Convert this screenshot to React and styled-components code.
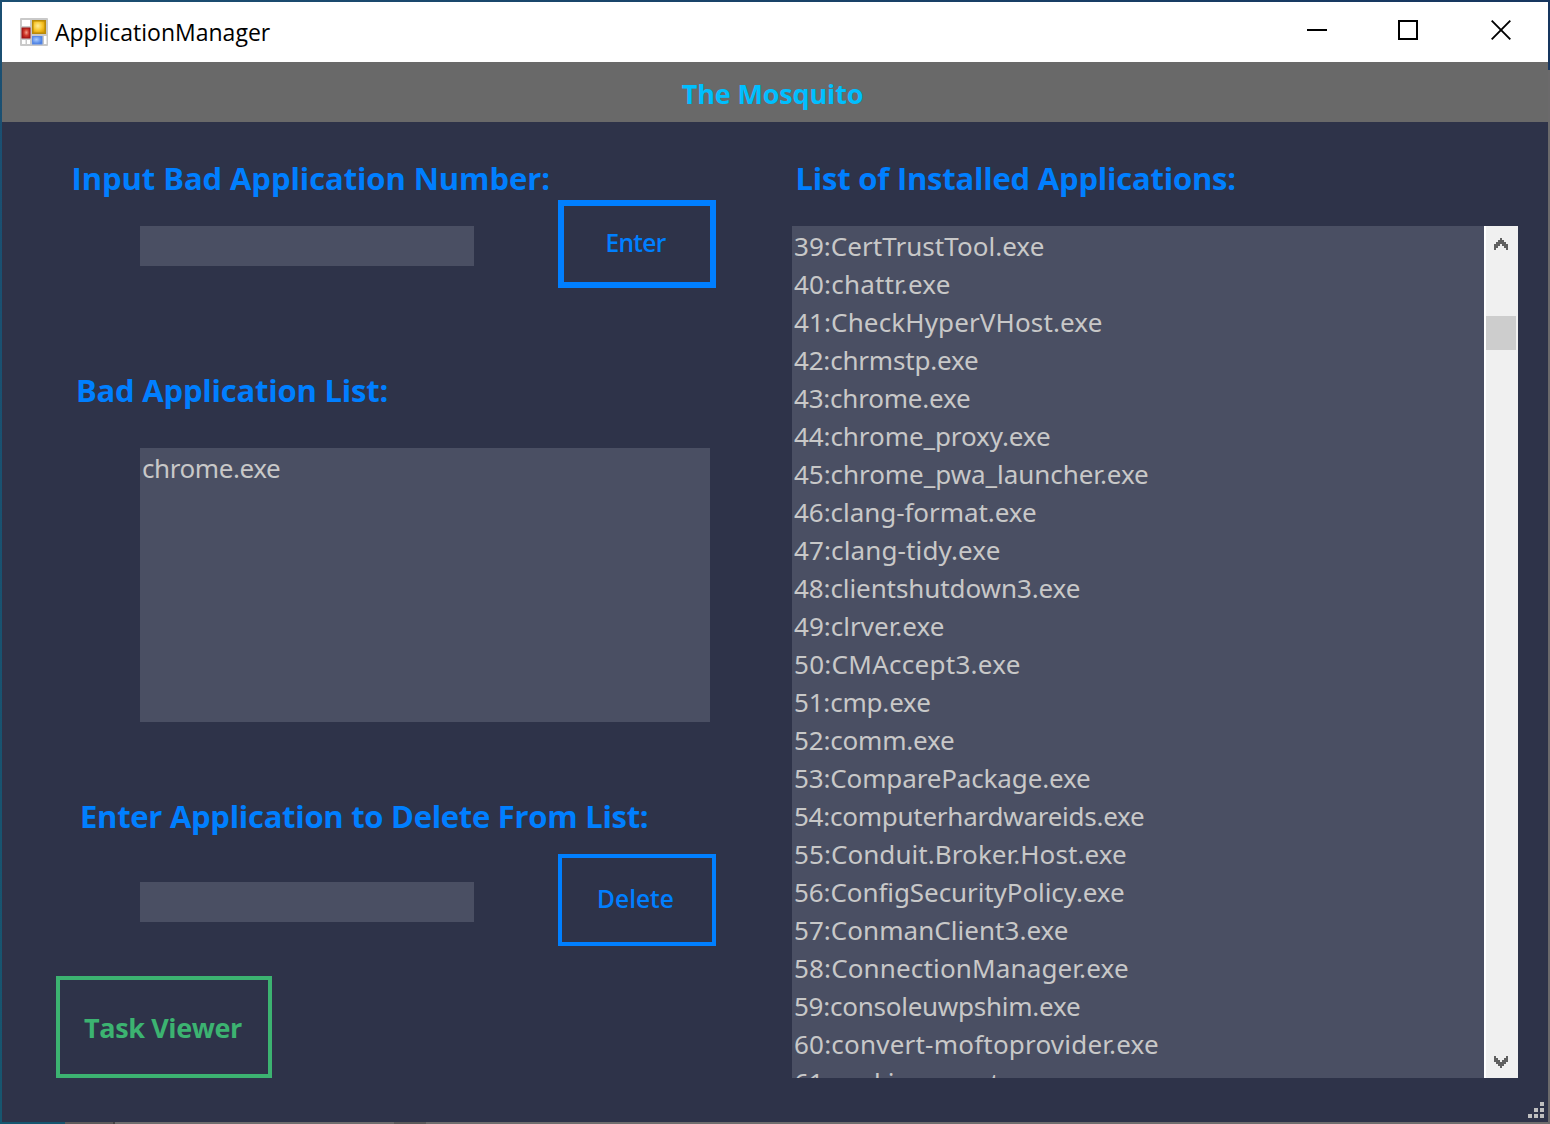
import React from "react";
import styled, { createGlobalStyle } from "styled-components";

const GlobalStyle = createGlobalStyle`
  * { box-sizing: border-box; }
  body { margin: 0; }
  button, input { font: inherit; border-radius: 0; outline: 0; }
`;

const bg = "#2e3349";
const field = "#4a4f63";
const blue = "#007fff";
const green = "#3cb371";

const Desktop = styled.div`
  width: 1550px;
  height: 1124px;
  display: grid;
  grid-template-columns: 2px 1546px 2px;
  grid-template-rows: 2px 1120px 2px;
  overflow: hidden;
  background: linear-gradient(90deg, #1b4f72, #17365f);
  font-family: "Open Sans", "Noto Sans", sans-serif;
`;

const LeftEdge = styled.div`
  grid-area: 2 / 1;
  background: linear-gradient(#1b4f72, #17566f);
`;

const RightEdge = styled.div`
  grid-area: 2 / 3 / 4 / 4;
  background: linear-gradient(#17365f 68px, #6b6a6b 68px);
`;

const BottomEdge = styled.div`
  grid-area: 3 / 1 / 4 / 3;
  background: linear-gradient(90deg, #17566f 65px, #5e5c5c 65px 113px, #454444 113px 115px, #6f6e6e 115px 394px, #5c5b5b 394px 426px, #6f6e6e 426px);
`;

const Window = styled.div`
  grid-area: 2 / 2;
  display: flex;
  flex-direction: column;
  position: relative;
  background: ${bg};
`;

const TitleBar = styled.header`
  height: 60px;
  flex: none;
  display: flex;
  align-items: center;
  padding-left: 18px;
  background: #fff;
  color: #000;
`;

const WindowTitle = styled.span`
  margin-left: 7px;
  font-size: 23px;
  line-height: 32px;
`;

const WindowControls = styled.div`
  display: flex;
  margin-left: auto;
  padding: 0 1px 4px 0;
`;

const ControlButton = styled.button`
  width: ${(p) => p.$width || 92}px;
  height: 56px;
  padding: 0;
  border: 0;
  background: none;
  display: flex;
  align-items: center;
  justify-content: center;
`;

const Banner = styled.h1`
  height: 60px;
  flex: none;
  margin: 0;
  padding: 2px 5px 0 0;
  display: flex;
  align-items: center;
  justify-content: center;
  background: #696969;
  color: #00bfff;
  font-size: 27px;
  font-weight: 700;
  letter-spacing: -0.15px;
`;

const Body = styled.main`
  flex: 1;
  min-height: 0;
  display: flex;
`;

const LeftPane = styled.section`
  width: 790px;
  padding: 36px 76px 0 54px;
  display: flex;
  flex-direction: column;
`;

const RightPane = styled.section`
  width: 726px;
  padding-top: 36px;
`;

const Heading = styled.h2`
  margin: 0;
  height: 40px;
  padding-left: ${(p) => p.$indent}px;
  color: ${blue};
  font-size: 31px;
  font-weight: 700;
  line-height: 40px;
  letter-spacing: ${(p) => p.$track}px;
  white-space: nowrap;
`;

const FormRow = styled.div`
  display: flex;
  align-items: center;
  justify-content: space-between;
  margin-top: ${(p) => p.$top}px;
  padding: 0 0 0 84px;
  height: ${(p) => p.$height}px;
`;

const TextField = styled.input`
  width: 334px;
  height: 40px;
  margin-top: 4px;
  padding: 0 2px;
  border: 0;
  background: ${field};
  color: #c8c8c8;
  font-size: 26px;
`;

const OutlineButton = styled.button`
  width: 158px;
  height: 100%;
  padding: 0 3px 2px 0;
  background: none;
  border: ${(p) => p.$border}px solid ${blue};
  color: ${blue};
  font-size: 24.5px;
  font-weight: 600;
  line-height: 34px;
  letter-spacing: ${(p) => p.$track}px;
`;

const TaskButton = styled.button`
  width: 216px;
  height: 102px;
  margin-top: 30px;
  padding: 0 2px 0 0;
  background: none;
  border: 4px solid ${green};
  color: ${green};
  font-size: 27px;
  font-weight: 700;
  letter-spacing: -0.38px;
`;

const BadListGroup = styled.div`
  margin: 82px 0 74px;
`;

const BadList = styled.ul`
  list-style: none;
  width: 570px;
  height: 274px;
  margin: 38px 0 0 84px;
  padding: 1px 2px;
  background: ${field};
`;

const ListFrame = styled.div`
  display: flex;
  height: 852px;
  margin-top: 28px;
`;

const AppList = styled.ul`
  list-style: none;
  flex: 1;
  margin: 0;
  padding: 1px 2px;
  overflow: hidden;
  background: ${field};
`;

const AppItem = styled.li`
  height: 38px;
  color: #c8c8c8;
  font-family: "Noto Sans", "Open Sans", sans-serif;
  font-size: 26px;
  line-height: 38px;
  letter-spacing: ${(p) => p.$track}px;
  white-space: nowrap;
`;

const ScrollBar = styled.div`
  width: 34px;
  border-left: 2px solid #fff;
  background: #f0f0f0;
  display: flex;
  flex-direction: column;
`;

const ScrollArrow = styled.div`
  height: 34px;
  padding: 12px 0 0 8px;
  svg { display: block; transform: ${(p) => (p.$down ? "scaleY(-1)" : "none")}; }
`;

const ScrollTrack = styled.div`
  flex: 1;
  padding-top: 56px;
`;

const ScrollThumb = styled.div`
  width: 30px;
  height: 34px;
  background: #cdcdcd;
`;

const SizeGrip = styled.svg`
  position: absolute;
  right: 4px;
  bottom: 4px;
`;

const apps = [
  ["39:CertTrustTool.exe", 0.04],
  ["40:chattr.exe", 0.18],
  ["41:CheckHyperVHost.exe", 0.13],
  ["42:chrmstp.exe", -0.19],
  ["43:chrome.exe", -0.21],
  ["44:chrome_proxy.exe", -0.08],
  ["45:chrome_pwa_launcher.exe", -0.05],
  ["46:clang-format.exe", -0.05],
  ["47:clang-tidy.exe", 0.13],
  ["48:clientshutdown3.exe", -0.09],
  ["49:clrver.exe", 0.03],
  ["50:CMAccept3.exe", 0.28],
  ["51:cmp.exe", -0.19],
  ["52:comm.exe", -0.18],
  ["53:ComparePackage.exe", -0.14],
  ["54:computerhardwareids.exe", -0.25],
  ["55:Conduit.Broker.Host.exe", 0.07],
  ["56:ConfigSecurityPolicy.exe", -0.08],
  ["57:ConmanClient3.exe", 0.04],
  ["58:ConnectionManager.exe", 0.15],
  ["59:consoleuwpshim.exe", -0.25],
  ["60:convert-moftoprovider.exe", 0.21],
  ["61:cookie_exporter.exe", -0.1],
];

const FormsIcon = () => (
  <svg width="28" height="28" viewBox="0 0 28 28">
    <defs>
      <radialGradient id="gold" cx=".4" cy=".4" r=".75">
        <stop offset="0" stopColor="#ffec9a" />
        <stop offset=".55" stopColor="#f8c62c" />
        <stop offset="1" stopColor="#d99b00" />
      </radialGradient>
      <radialGradient id="ruby" cx=".55" cy=".45" r=".7">
        <stop offset="0" stopColor="#f4a08c" />
        <stop offset=".5" stopColor="#cf3a2a" />
        <stop offset="1" stopColor="#a81414" />
      </radialGradient>
      <radialGradient id="azure" cx=".4" cy=".4" r=".75">
        <stop offset="0" stopColor="#a9cbff" />
        <stop offset="1" stopColor="#3f78e0" />
      </radialGradient>
    </defs>
    <rect width="28" height="28" rx="1" fill="#c9c9c9" />
    <rect x="2" y="2" width="8" height="6" fill="#fff" />
    <rect x="2" y="22" width="3.5" height="4" fill="#fff" />
    <rect x="7" y="22" width="3" height="4" fill="#fff" />
    <rect x="24" y="18" width="2.5" height="8" fill="#fff" />
    <rect x="1.5" y="9.5" width="9" height="11" fill="#9c1717" />
    <rect x="2.5" y="10.5" width="7" height="9" fill="url(#ruby)" />
    <rect x="12" y="2" width="14" height="14" fill="#b98a08" />
    <rect x="13.5" y="3.5" width="11" height="11" fill="url(#gold)" />
    <rect x="12" y="18" width="10.5" height="8.5" fill="#5a8ae6" />
    <rect x="13" y="19" width="8.5" height="6.5" fill="url(#azure)" />
  </svg>
);

const Chevron = () => (
  <svg width="14" height="12" viewBox="0 0 14 12" shapeRendering="crispEdges">
    <path
      fill="#606060"
      d="M6 0h2v2h2v2h2v2h2v6h-2v-2h-2v-2h-2v-2H6v2H4v2H2v2H0V6h2V4h2V2h2z"
    />
  </svg>
);

export default function App() {
  return (
    <Desktop>
      <GlobalStyle />
      <LeftEdge />
      <RightEdge />
      <BottomEdge />
      <Window>
        <TitleBar>
          <FormsIcon />
          <WindowTitle>ApplicationManager</WindowTitle>
          <WindowControls>
            <ControlButton $width={90} aria-label="Minimize">
              <svg width="20" height="20" shapeRendering="crispEdges">
                <path d="M0 10h20" stroke="#000" strokeWidth="2" />
              </svg>
            </ControlButton>
            <ControlButton aria-label="Maximize">
              <svg width="20" height="20" shapeRendering="crispEdges">
                <rect x="1" y="1" width="18" height="18" fill="none" stroke="#000" strokeWidth="2" />
              </svg>
            </ControlButton>
            <ControlButton $width={93} aria-label="Close">
              <svg width="20" height="20">
                <path d="M.7.7l18.6 18.6M19.3.7L.7 19.3" stroke="#000" strokeWidth="1.9" />
              </svg>
            </ControlButton>
          </WindowControls>
        </TitleBar>
        <Banner>The Mosquito</Banner>
        <Body>
          <LeftPane>
            <Heading $indent={15.6} $track={-0.09}>Input Bad Application Number:</Heading>
            <FormRow $top={2} $height={88}>
              <TextField aria-label="Application number" />
              <OutlineButton $border={6} $track={-0.7}>Enter</OutlineButton>
            </FormRow>
            <BadListGroup>
              <Heading $indent={20} $track={-0.22}>Bad Application List:</Heading>
              <BadList>
                <AppItem $track={-0.42}>chrome.exe</AppItem>
              </BadList>
            </BadListGroup>
            <Heading $indent={24} $track={-0.29}>Enter Application to Delete From List:</Heading>
            <FormRow $top={18} $height={92}>
              <TextField aria-label="Application to delete" />
              <OutlineButton $border={4} $track={0}>Delete</OutlineButton>
            </FormRow>
            <TaskButton>Task Viewer</TaskButton>
          </LeftPane>
          <RightPane>
            <Heading $indent={3.5} $track={-0.22}>List of Installed Applications:</Heading>
            <ListFrame>
              <AppList>
                {apps.map(([name, track]) => (
                  <AppItem key={name} $track={track}>{name}</AppItem>
                ))}
              </AppList>
              <ScrollBar>
                <ScrollArrow><Chevron /></ScrollArrow>
                <ScrollTrack><ScrollThumb /></ScrollTrack>
                <ScrollArrow $down><Chevron /></ScrollArrow>
              </ScrollBar>
            </ListFrame>
          </RightPane>
        </Body>
        <SizeGrip width="16" height="16" shapeRendering="crispEdges">
          <path
            fill="#bfbfbf"
            d="M12 0h4v4h-4zM6 6h4v4H6zM12 6h4v4h-4zM0 12h4v4H0zM6 12h4v4H6zM12 12h4v4h-4z"
          />
        </SizeGrip>
      </Window>
    </Desktop>
  );
}
